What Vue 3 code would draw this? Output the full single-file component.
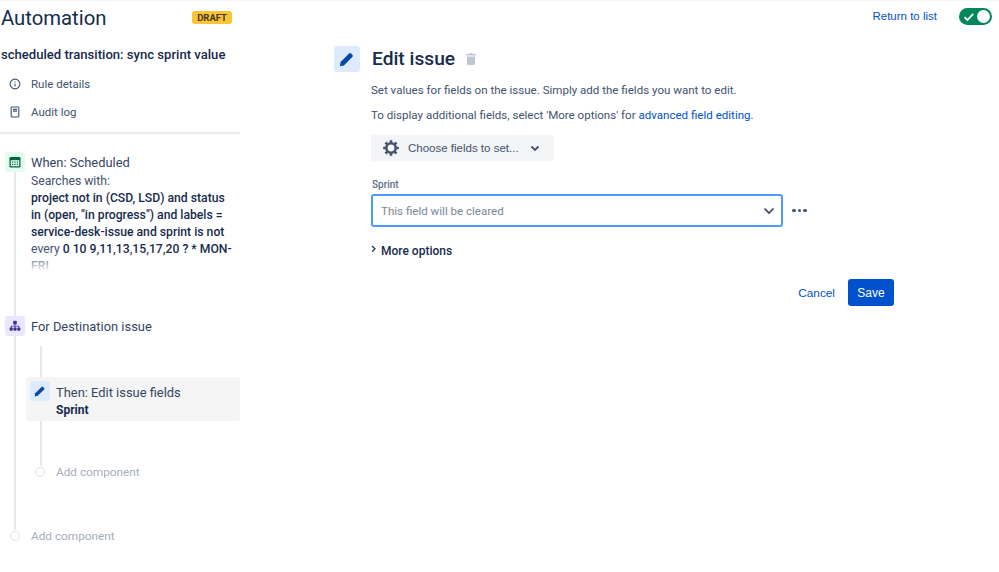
<script setup>
const intro = 'Set values for fields on the issue. Simply add the fields you want to edit.'
</script>

<template>
  <div class="page">
    <aside class="side">
      <div class="brand">
        <h1>Automation</h1>
        <span class="draft">DRAFT</span>
      </div>
      <h2 class="rule-name">scheduled transition: sync sprint value</h2>
      <nav class="links">
        <a class="link">
          <svg width="12" height="12" viewBox="0 0 12 12" fill="none" stroke="#42526e" stroke-width="1.1"><circle cx="6" cy="6" r="4.9"/><path d="M6 5.4v3M6 3.2v1.1"/></svg>
          Rule details
        </a>
        <a class="link">
          <svg width="12" height="12" viewBox="0 0 12 12" fill="none" stroke="#42526e" stroke-width="1.1"><rect x="2.2" y="1" width="7.6" height="10" rx=".8"/><path d="M4 3.4h4M4 5.2h4" stroke-width="1.3"/></svg>
          Audit log
        </a>
      </nav>
      <div class="flow">
        <div class="rail"></div>
        <div class="step when">
          <span class="tile green">
            <svg width="14" height="14" viewBox="0 0 14 14"><rect x="1.5" y="2" width="11" height="10.5" rx="1.2" fill="#006644"/><rect x="2.8" y="5.2" width="8.4" height="6" fill="#e3fcef"/><path d="M4 6.5h1.2v1.2H4zM6.4 6.5h1.2v1.2H6.4zM8.8 6.5H10v1.2H8.8zM4 8.8h1.2V10H4zM6.4 8.8h1.2V10H6.4zM8.8 8.8H10V10H8.8z" fill="#006644"/></svg>
          </span>
          <div class="step-body">
            <div class="step-title">When: Scheduled</div>
            <div class="fade">
              <div class="muted">Searches with:</div>
              <div class="jql">project not in (CSD, LSD) and status in (open, "in progress") and labels = service-desk-issue and sprint is not</div>
              <div class="cron"><span class="muted">every </span><b>0 10 9,11,13,15,17,20 ? * MON-FRI</b></div>
            </div>
          </div>
        </div>
        <div class="step branch">
          <span class="tile purple">
            <svg width="12" height="12" viewBox="0 0 12 12" fill="#403294"><rect x="4.2" y=".8" width="3.6" height="3.6" rx="1"/><rect x=".6" y="7.6" width="3.2" height="3.2" rx="1"/><rect x="4.4" y="7.6" width="3.2" height="3.2" rx="1"/><rect x="8.2" y="7.6" width="3.2" height="3.2" rx="1"/><path d="M5.6 4h.8v1.7h3.8v2.2h-.8V6.5H6.4v1.4h-.8V6.5H2.6v1.4h-.8V5.7h3.8z"/></svg>
          </span>
          <div class="step-title">For Destination issue</div>
        </div>
        <div class="nested">
          <div class="rail inner"></div>
          <div class="action">
            <span class="tile blue">
              <svg width="12" height="12" viewBox="0 0 12 12" fill="#0747a6"><path d="M1.2 8.3 7.6 1.900a1 1 0 0 1 1.400 0l1.100 1.100a1 1 0 0 1 0 1.400L3.700 10.800l-3 .7z"/></svg>
            </span>
            <div class="action-text">
              <div class="step-title">Then: Edit issue fields</div>
              <div class="sprint">Sprint</div>
            </div>
          </div>
          <div class="add inner-add"><span class="dot"></span>Add component</div>
        </div>
        <div class="add outer-add"><span class="dot"></span>Add component</div>
      </div>
    </aside>

    <main class="main">
      <div class="topbar">
        <a class="return">Return to list</a>
        <span class="toggle">
          <svg width="12" height="10" viewBox="0 0 12 10" fill="none" stroke="#fff" stroke-width="1.8"><path d="M1.500 5.200 4.400 8l5.800-6.200"/></svg>
          <i class="knob"></i>
        </span>
      </div>
      <div class="editor">
        <span class="big-tile">
          <svg width="16" height="16" viewBox="0 0 12 12" fill="#0747a6"><path d="M1.2 8.3 7.6 1.900a1 1 0 0 1 1.400 0l1.100 1.100a1 1 0 0 1 0 1.400L3.700 10.800l-3 .7z"/></svg>
        </span>
        <div class="form">
          <div class="heading">
            <h3>Edit issue</h3>
            <svg width="10" height="12" viewBox="0 0 10 12" fill="#c1c7d0"><path d="M3.500 0h3v1H10v1.500H0V1h3.500zM1 3.500h8V11a1 1 0 0 1-1 1H2a1 1 0 0 1-1-1z"/></svg>
          </div>
          <p class="p1">{{ intro }}</p>
          <p class="p2">To display additional fields, select 'More options' for <a>advanced field editing</a>.</p>
          <button class="choose">
            <svg width="18" height="18" viewBox="0 0 18 18" fill="none"><circle cx="9" cy="9" r="4.7" stroke="#42526e" stroke-width="2.6"/><path d="M9 1.200V3.500M9 14.500v2.300M1.200 9H3.500M14.500 9h2.300M3.500 3.500 5.100 5.100M12.900 12.900l1.600 1.600M3.500 14.500l1.600-1.600M12.900 5.100l1.600-1.600" stroke="#42526e" stroke-width="2.600"/></svg>
            <span>Choose fields to set...</span>
            <svg width="10" height="7" viewBox="0 0 10 7" fill="none" stroke="#42526e" stroke-width="1.8"><path d="M1.500 1.500 5 5l3.500-3.500"/></svg>
          </button>
          <label class="label">Sprint</label>
          <div class="field-row">
            <div class="select">
              <span>This field will be cleared</span>
              <svg width="12" height="8" viewBox="0 0 12 8" fill="none" stroke="#344563" stroke-width="1.7"><path d="M1.500 1.500 6 6l4.500-4.500"/></svg>
            </div>
            <span class="dots"><i></i><i></i><i></i></span>
          </div>
          <div class="more">
            <svg width="5" height="8" viewBox="0 0 5 8" fill="none" stroke="#172b4d" stroke-width="1.2"><path d="M1 1l3 2.800L1 6.600"/></svg>
            <span>More options</span>
          </div>
          <div class="actions">
            <a class="cancel">Cancel</a>
            <button class="save">Save</button>
          </div>
        </div>
      </div>
    </main>
  </div>
</template>

<style>
html, body { margin: 0; background: #fff; }
</style>

<style scoped>
.page {
  width: 999px;
  height: 572px;
  display: flex;
  overflow: hidden;
  box-sizing: border-box;
  border-top: 1px solid #f4f5f7;
  font-family: Roboto, "Noto Sans", sans-serif;
  color: #172b4d;
}
.side { width: 240px; flex: none; margin-right: 94px; }
.brand { display: flex; justify-content: space-between; align-items: center; height: 34px; padding-right: 8px; }
h1 { margin: 0; font-size: 20.3px; font-weight: 400; line-height: 32px; padding-left: 1px; }
.draft { background: #fbc437; color: #42391b; font-size: 9.5px; font-weight: 700; border-radius: 3px; padding: 0 5px; height: 13px; line-height: 13px; margin-top: -2px; }
.rule-name { margin: 10px 0 0 1px; font-size: 13.1px; font-weight: 500; line-height: 20px; white-space: nowrap; }
.links { margin-top: 5px; border-bottom: 2px solid #ebecf0; padding-bottom: 6px; }
.link { display: flex; align-items: center; gap: 10px; height: 28px; padding-left: 9px; font-size: 11.5px; color: #42526e; }
.flow { position: relative; padding-top: 18px; }
.rail { position: absolute; left: 14px; top: 38px; height: 358px; width: 2px; background: #e6e8f0; }
.step { position: relative; display: flex; gap: 6px; padding-left: 5px; }
.tile { width: 20px; height: 20px; border-radius: 3px; flex: none; display: flex; align-items: center; justify-content: center; }
.green { background: #e3fcef; }
.purple { background: #eae6ff; }
.blue { background: #deebff; }
.step-title { font-size: 12.9px; height: 20px; line-height: 22px; color: #344563; }
.step-body { min-width: 0; width: 203px; }
.fade { height: 102px; overflow: hidden; font-size: 12.2px; line-height: 17px; position: relative; margin-top: 1px; }
.fade::after { content: ""; position: absolute; left: 0; right: 0; bottom: 0; height: 24px; background: linear-gradient(rgba(255,255,255,0), #fff 85%); }
.muted { color: #42526e; }
.jql, .cron b { font-weight: 500; color: #172b4d; }
.branch { margin-top: 41px; }
.nested { position: relative; margin-top: 10px; padding: 31px 0 0 26px; }
.rail.inner { left: 40px; top: 0; height: 120px; }
.action { position: relative; display: flex; gap: 6px; padding: 4px; height: 36px; background: rgba(244,244,244,.92); border-radius: 3px; width: 206px; }
.action-text { padding-top: 1px; }
.sprint { font-size: 12px; font-weight: 700; line-height: 16px; }
.add { position: relative; display: flex; align-items: center; gap: 11px; font-size: 11.8px; color: #a5adba; line-height: 20px; height: 20px; }
.dot { width: 8px; height: 8px; border: 1px solid #dfe1e6; border-radius: 50%; background: #fff; }
.inner-add { margin: 41px 0 0 9px; }
.outer-add { margin: 44px 0 0 10px; }
.main { flex: 1; min-width: 0; }
.topbar { position: absolute; right: 7px; top: 8px; display: flex; align-items: center; gap: 22px; }
.return { font: 11.5px "Liberation Sans", sans-serif; color: #0052cc; margin-top: -2px; }
.toggle { width: 33px; height: 17px; border-radius: 9px; background: #00875a; display: flex; align-items: center; padding-left: 4px; box-sizing: border-box; position: relative; }
.knob { position: absolute; right: 2px; top: 2px; width: 13px; height: 13px; border-radius: 50%; background: #fff; }
.editor { display: flex; gap: 11px; margin-top: 45px; }
.big-tile { width: 26px; height: 26px; border-radius: 3px; background: #deebff; display: flex; align-items: center; justify-content: center; flex: none; }
.form { width: 523px; }
.heading { display: flex; align-items: center; gap: 11px; height: 26px; }
h3 { margin: 0; font-size: 19.2px; font-weight: 500; line-height: 24px; padding-left: 1px; }
p { margin: 0; font-size: 11.55px; line-height: 16px; color: #42526e; }
.p1 { margin-top: 10px; }
.p2 { margin-top: 9px; }
.p2 a { color: #0052cc; }
.choose { display: flex; align-items: center; margin-top: 12px; height: 26px; width: 183px; padding: 0 0 0 11px; border: 0; border-radius: 3px; background: #f4f5f7; color: #42526e; font: 11.5px "Liberation Sans", sans-serif; }
.choose span { margin: 0 11px 0 8px; }
.label { display: block; margin-top: 17px; font-size: 10px; line-height: 14px; font-weight: 500; color: #5e6c84; padding-left: 1px; }
.field-row { display: flex; align-items: center; gap: 9px; margin-top: 2px; width: 437px; }
.select { width: 412px; height: 33px; flex: none; box-sizing: border-box; border: 2px solid #4c9aff; border-radius: 3px; display: flex; align-items: center; justify-content: space-between; padding: 0 6px 0 8px; font-size: 11.55px; color: #7a869a; }
.dots { display: flex; gap: 2px; }
.dots i { width: 3.5px; height: 3.5px; border-radius: 50%; background: #42526e; }
.more { display: flex; align-items: center; gap: 5px; margin-top: 15px; font-size: 12px; font-weight: 500; line-height: 18px; }
.more svg { margin-top: -4px; }
.actions { display: flex; align-items: center; justify-content: flex-end; gap: 13px; margin-top: 19px; }
.cancel { font: 11.8px "Liberation Sans", sans-serif; color: #0052cc; }
.save { width: 46px; height: 27px; border: 0; border-radius: 3px; background: #0052cc; color: #fff; font: 500 12px "Liberation Sans", sans-serif; }
</style>
